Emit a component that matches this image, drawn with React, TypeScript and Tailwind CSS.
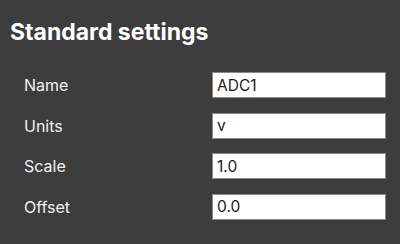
import React from 'react'

const fields = [
  { label: 'Name', value: 'ADC1' },
  { label: 'Units', value: 'v' },
  { label: 'Scale', value: '1.0' },
  { label: 'Offset', value: '0.0' },
]

export default function App() {
  return (
    <div
      className="w-[400px] h-[244px] bg-[#3d3d3d] text-white overflow-hidden"
      style={{ fontFamily: 'Inter, "Liberation Sans", sans-serif' }}
    >
      <h1 className="pl-[10px] pt-[17px] text-[23px] leading-[30px] font-bold text-white">
        Standard settings
      </h1>
      <div className="flex flex-col gap-[14.5px] mt-[25px] pl-[24px] pr-[14px]">
        {fields.map((f) => (
          <div key={f.label} className="flex items-center justify-between h-[26px]">
            <span className="text-[16px] text-[#f2f2f2]">{f.label}</span>
            <input
              readOnly
              value={f.value}
              className="w-[174px] h-[26px] bg-white border border-[#8a8a8a] px-[4px] text-[15.5px] text-[#1a1a1a] outline-none"
            />
          </div>
        ))}
      </div>
    </div>
  )
}
